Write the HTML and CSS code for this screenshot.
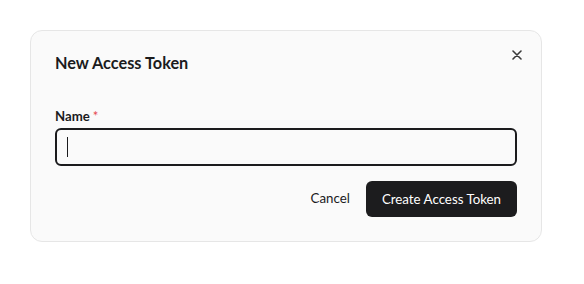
FILE: index.html
```html
<!DOCTYPE html>
<html lang="en">
<head>
   <meta charset="utf-8">
   <title>New Access Token</title>
   <link rel="stylesheet" href="styles.css">
</head>
<body>
   <div class="dialog">
      <div class="dialog-header">
         <h2>New Access Token</h2>
         <button class="close-btn" aria-label="Close">
            <svg width="10" height="10" viewBox="0 0 10 10">
               <path d="M1 1L9 9M9 1L1 9" stroke="#3a3a3a" stroke-width="1.6" stroke-linecap="round"/>
            </svg>
         </button>
      </div>

      <label class="field-label" for="tokenName">Name<span class="required">*</span></label>
      <div class="input-box">
         <span class="caret"></span>
         <input type="text" id="tokenName">
      </div>

      <div class="actions">
         <button class="cancel-btn">Cancel</button>
         <button class="create-btn">Create Access Token</button>
      </div>
   </div>
</body>
</html>
```

FILE: styles.css
```css
body {
   margin: 0;
   padding: 30px;
   background: #ffffff;
   font-family: 'Lato', 'Noto Sans', sans-serif;
   color: #1b1b1d;
}

.dialog {
   width: 462px;
   padding: 24px;
   background: #fafafa;
   border: 1px solid #e6e6e6;
   border-radius: 12px;
}

.dialog-header {
   display: flex;
   justify-content: space-between;
   align-items: flex-start;
   height: 24px;
}

.dialog-header h2 {
   margin: 0;
   font-size: 16.3px;
   line-height: 16px;
   padding-top: 0;
   font-weight: 700;
}

.close-btn {
   border: none;
   background: none;
   padding: 0;
   margin: -10px -10px 0 0;
   width: 20px;
   height: 20px;
   display: flex;
   align-items: center;
   justify-content: center;
   cursor: pointer;
}

.field-label {
   display: block;
   margin-top: 27px;
   font-size: 13.2px;
   line-height: 20px;
   font-weight: 700;
}

.required {
   color: #e5484d;
   margin-left: 3px;
   font-weight: 400;
}

.input-box {
   position: relative;
   margin-top: 2px;
   height: 34px;
   border: 2px solid #1b1b1d;
   border-radius: 6px;
   background: #fafafa;
}

.input-box input {
   width: 100%;
   height: 100%;
   box-sizing: border-box;
   border: none;
   background: transparent;
   outline: none;
   padding: 0 12px;
   font: inherit;
}

.caret {
   position: absolute;
   left: 10px;
   top: 7px;
   width: 1px;
   height: 20px;
   background: #1b1b1d;
}

.actions {
   display: flex;
   justify-content: flex-end;
   align-items: center;
   gap: 16px;
   margin-top: 15px;
}

.cancel-btn {
   border: none;
   background: none;
   padding: 0;
   font: inherit;
   font-size: 13.3px;
   color: #1b1b1d;
   cursor: pointer;
   margin-top: -3px;
}

.create-btn {
   border: none;
   border-radius: 6px;
   background: #1c1c1e;
   color: #ffffff;
   font: inherit;
   font-size: 13.3px;
   height: 36px;
   padding: 0 16px;
   cursor: pointer;
}
```
